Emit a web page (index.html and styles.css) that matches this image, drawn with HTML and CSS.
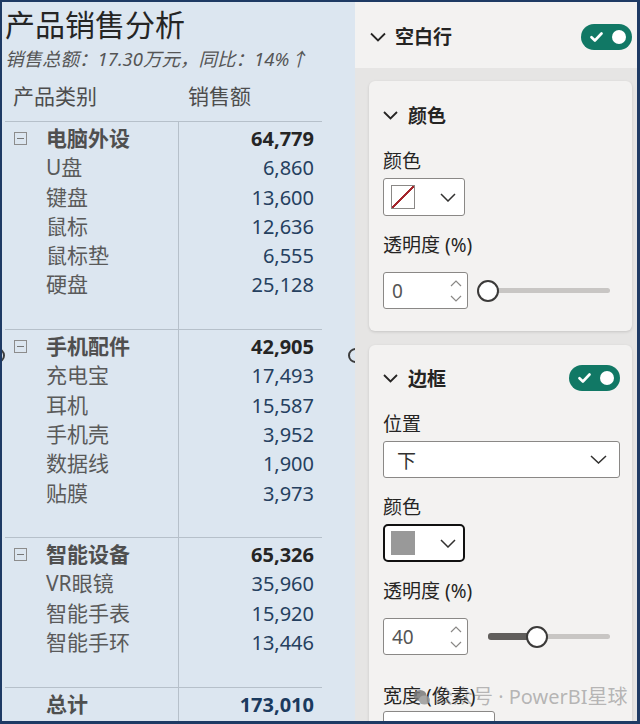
FILE: index.html
```html
<!DOCTYPE html>
<html lang="zh-CN">
<head>
    <meta charset="UTF-8">
    <meta name="viewport" content="width=device-width, initial-scale=1.0">
    <title>产品销售分析 - 格式设置</title>
    <link rel="stylesheet" href="styles.css">
</head>
<body>
    <div class="frame">
        <!-- Matrix visual -->
        <section class="visual">
            <h1 class="title">产品销售分析</h1>
            <p class="subtitle">销售总额：17.30万元，同比：14%↑</p>
            <div class="thead">
                <div class="th">产品类别</div>
                <div class="th th-amt">销售额</div>
            </div>
            <div class="tbody">
                <div class="group">
                    <div class="cell cat"><span class="collapse"></span>电脑外设</div>
                    <div class="cell amt">64,779</div>
                    <div class="cell sub">U盘</div><div class="cell num">6,860</div>
                    <div class="cell sub">键盘</div><div class="cell num">13,600</div>
                    <div class="cell sub">鼠标</div><div class="cell num">12,636</div>
                    <div class="cell sub">鼠标垫</div><div class="cell num">6,555</div>
                    <div class="cell sub">硬盘</div><div class="cell num">25,128</div>
                </div>
                <div class="group">
                    <div class="cell cat"><span class="collapse"></span>手机配件</div>
                    <div class="cell amt">42,905</div>
                    <div class="cell sub">充电宝</div><div class="cell num">17,493</div>
                    <div class="cell sub">耳机</div><div class="cell num">15,587</div>
                    <div class="cell sub">手机壳</div><div class="cell num">3,952</div>
                    <div class="cell sub">数据线</div><div class="cell num">1,900</div>
                    <div class="cell sub">贴膜</div><div class="cell num">3,973</div>
                </div>
                <div class="group">
                    <div class="cell cat"><span class="collapse"></span>智能设备</div>
                    <div class="cell amt">65,326</div>
                    <div class="cell sub">VR眼镜</div><div class="cell num">35,960</div>
                    <div class="cell sub">智能手表</div><div class="cell num">15,920</div>
                    <div class="cell sub">智能手环</div><div class="cell num">13,446</div>
                </div>
                <div class="group total">
                    <div class="cell cat total-label">总计</div>
                    <div class="cell amt total-amt">173,010</div>
                </div>
            </div>
            <span class="handle handle-left"></span>
            <span class="handle handle-right"></span>
        </section>

        <!-- Format pane -->
        <aside class="pane">
            <div class="pane-head">
                <svg class="chev" width="16" height="10" viewBox="0 0 16 10"><path d="M1 1.5l7 7 7-7" fill="none" stroke="#252423" stroke-width="1.8"/></svg>
                <span class="pane-title">空白行</span>
                <span class="toggle">
                    <svg width="13" height="10" viewBox="0 0 13 10"><path d="M1.5 5.2l3.4 3.3 6.6-7" fill="none" stroke="#fff" stroke-width="2.6" stroke-linecap="round" stroke-linejoin="round"/></svg>
                    <span class="toggle-dot"></span>
                </span>
            </div>

            <div class="cards">
                <div class="card">
                    <div class="card-head">
                        <svg width="15" height="9" viewBox="0 0 15 9"><path d="M1 1l6.5 6.5L14 1" fill="none" stroke="#252423" stroke-width="1.8"/></svg>
                        颜色
                    </div>
                    <div class="label">颜色</div>
                    <div class="picker">
                        <span class="swatch swatch-none"></span>
                        <svg width="16" height="9" viewBox="0 0 16 9"><path d="M1 1l7 7 7-7" fill="none" stroke="#323130" stroke-width="1.5"/></svg>
                    </div>
                    <div class="label">透明度 (%)</div>
                    <div class="spin-row">
                        <div class="spin">
                            <span>0</span>
                            <svg width="12" height="22" viewBox="0 0 12 22"><path d="M1 6l5-5 5 5M1 16l5 5 5-5" fill="none" stroke="#8a8886" stroke-width="1.2"/></svg>
                        </div>
                        <div class="slider">
                            <span class="fill" style="width: 0%"></span>
                            <span class="knob" style="left: 0%"></span>
                        </div>
                    </div>
                </div>

                <div class="card card-border">
                    <div class="card-head">
                        <svg width="15" height="9" viewBox="0 0 15 9"><path d="M1 1l6.5 6.5L14 1" fill="none" stroke="#252423" stroke-width="1.8"/></svg>
                        边框
                        <span class="toggle">
                            <svg width="13" height="10" viewBox="0 0 13 10"><path d="M1.5 5.2l3.4 3.3 6.6-7" fill="none" stroke="#fff" stroke-width="2.6" stroke-linecap="round" stroke-linejoin="round"/></svg>
                            <span class="toggle-dot"></span>
                        </span>
                    </div>
                    <div class="label">位置</div>
                    <div class="dropdown">
                        <span>下</span>
                        <svg width="17" height="9" viewBox="0 0 17 9"><path d="M1 1l7.5 7L16 1" fill="none" stroke="#323130" stroke-width="1.5"/></svg>
                    </div>
                    <div class="label">颜色</div>
                    <div class="picker picker-active">
                        <span class="swatch swatch-gray"></span>
                        <svg width="16" height="9" viewBox="0 0 16 9"><path d="M1 1l7 7 7-7" fill="none" stroke="#323130" stroke-width="1.5"/></svg>
                    </div>
                    <div class="label">透明度 (%)</div>
                    <div class="spin-row">
                        <div class="spin">
                            <span>40</span>
                            <svg width="12" height="22" viewBox="0 0 12 22"><path d="M1 6l5-5 5 5M1 16l5 5 5-5" fill="none" stroke="#8a8886" stroke-width="1.2"/></svg>
                        </div>
                        <div class="slider">
                            <span class="fill" style="width: 40%"></span>
                            <span class="knob" style="left: 40%"></span>
                        </div>
                    </div>
                    <div class="label label-gap">宽度 (像素)</div>
                    <div class="spin spin-wide"></div>
                </div>
            </div>
        </aside>

        <!-- Watermark -->
        <div class="watermark">
            <svg width="18" height="18" viewBox="0 0 18 18"><ellipse cx="7" cy="7.5" rx="6.5" ry="5.5" fill="#7a7a7a"/><ellipse cx="11.5" cy="12" rx="5.5" ry="4.5" fill="#9a9a9a"/></svg>
            <span>公众号 · PowerBI星球</span>
        </div>
    </div>
</body>
</html>
```

FILE: styles.css
```css
body {
    margin: 0;
    font-family: "Noto Sans", "Noto Sans CJK SC", sans-serif;
}
.frame {
    position: relative;
    display: flex;
    width: 640px;
    height: 724px;
    box-sizing: border-box;
    border: 2px solid #1e3a64;
    border-right-width: 3px;
    border-bottom-width: 3px;
    overflow: hidden;
}

/* Matrix visual */
.visual {
    position: relative;
    display: flex;
    flex-direction: column;
    flex: none;
    width: 353px;
    box-sizing: border-box;
    padding: 5px 0 0 3px;
    background-color: #dce6f0;
    overflow: hidden;
}
.title {
    margin: 0;
    font-size: 30px;
    line-height: 36px;
    font-weight: 400;
    color: #252525;
}
.subtitle {
    margin: 4px 0 0;
    font-size: 18.5px;
    line-height: 24px;
    font-style: italic;
    color: #555;
}
.thead {
    display: grid;
    grid-template-columns: 173px 144px;
    width: 317px;
    margin-top: 10px;
    padding-bottom: 10px;
    border-bottom: 1px solid #b6c0ca;
    font-size: 21px;
    line-height: 30px;
    color: #4d4d4d;
}
.th {
    padding-left: 8px;
}
.th-amt {
    padding-left: 10px;
}
.tbody {
    flex: 1;
    width: 317px;
    background: linear-gradient(#b6c0ca, #b6c0ca) 173px 0 / 1px 100% no-repeat;
}
.group {
    display: grid;
    grid-template-columns: 173px 144px;
    grid-auto-rows: 29.3px;
    padding: 2px 0 29.3px;
    border-bottom: 1px solid #b6c0ca;
}
.total {
    padding-bottom: 0;
    border-bottom: none;
}
.cell {
    line-height: 29.3px;
    white-space: nowrap;
}
.cat {
    display: flex;
    align-items: center;
    padding-left: 9px;
    font-size: 21px;
    font-weight: 700;
    color: #4f4f4f;
}
.collapse {
    position: relative;
    width: 13px;
    height: 13px;
    box-sizing: border-box;
    margin-right: 19px;
    border: 1px solid #8c8c8c;
}
.collapse::after {
    content: "";
    position: absolute;
    left: 2px;
    right: 2px;
    top: 5px;
    height: 1px;
    background-color: #777;
}
.sub {
    padding-left: 41px;
    font-size: 21px;
    color: #5a5a5a;
}
.amt, .num {
    padding-right: 8px;
    text-align: right;
    font-size: 20px;
}
.amt {
    font-weight: 700;
    color: #252525;
}
.num {
    color: #25405f;
}
.total-label {
    padding-left: 41px;
}
.total-amt {
    color: #1b3a5e;
}
.handle {
    position: absolute;
    top: 346px;
    width: 15px;
    height: 15px;
    box-sizing: border-box;
    border: 2px solid #3d3d3d;
    border-radius: 50%;
}
.handle-left {
    left: -12px;
}
.handle-right {
    left: 346px;
}

/* Format pane */
.pane {
    display: flex;
    flex-direction: column;
    flex: 1;
    background-color: #e6e5e4;
    overflow: hidden;
    font-size: 19px;
    color: #252423;
}
.pane-head {
    display: flex;
    align-items: center;
    gap: 9px;
    flex: none;
    height: 66px;
    box-sizing: border-box;
    padding: 4px 5px 0 15px;
    background-color: #f3f2f1;
}
.pane-title {
    font-weight: 700;
    line-height: 28px;
}
.toggle {
    display: flex;
    align-items: center;
    justify-content: space-between;
    width: 51px;
    height: 26px;
    box-sizing: border-box;
    margin-left: auto;
    padding: 0 6px 0 9px;
    border-radius: 13px;
    background-color: #117865;
}
.toggle-dot {
    width: 14px;
    height: 14px;
    border-radius: 50%;
    background-color: #fff;
}
.cards {
    display: flex;
    flex-direction: column;
    gap: 14px;
    padding: 13px 5px 0 14px;
}
.card {
    flex: none;
    padding: 20px 12px 22px 14px;
    border-radius: 6px;
    background-color: #f3f2f1;
    box-shadow: 0 1px 3px rgba(0, 0, 0, 0.14);
}
.card-border {
    padding-top: 19px;
}
.card-head {
    display: flex;
    align-items: center;
    gap: 10px;
    height: 28px;
    font-weight: 700;
}
.label {
    margin-top: 17px;
    line-height: 24px;
}
.card-head + .label {
    margin-top: 20px;
}
.label-gap {
    margin-top: 29px;
}
.picker {
    display: flex;
    align-items: center;
    justify-content: space-between;
    width: 82px;
    height: 38px;
    box-sizing: border-box;
    margin-top: 5px;
    padding: 0 8px 0 7px;
    border: 1px solid #8a8886;
    border-radius: 3px;
    background-color: #fff;
}
.picker-active {
    padding: 0 7px 0 6px;
    border: 2px solid #111;
    border-radius: 5px;
}
.swatch {
    width: 24px;
    height: 24px;
    box-sizing: border-box;
}
.swatch-none {
    border: 1px solid #8a8886;
    background: linear-gradient(to bottom right, transparent calc(50% - 1px), #a4262c calc(50% - 1px), #a4262c calc(50% + 1px), transparent calc(50% + 1px));
}
.swatch-gray {
    background-color: #999;
}
.dropdown {
    display: flex;
    align-items: center;
    justify-content: space-between;
    height: 37px;
    box-sizing: border-box;
    margin-top: 5px;
    padding: 0 12px 0 13px;
    border: 1px solid #8a8886;
    border-radius: 3px;
    background-color: #fff;
    color: #323130;
}
.spin-row {
    display: flex;
    align-items: center;
    margin-top: 15px;
}
.spin {
    display: flex;
    align-items: center;
    justify-content: space-between;
    width: 85px;
    height: 37px;
    box-sizing: border-box;
    padding: 0 5px 0 8px;
    border: 1px solid #8a8886;
    border-radius: 3px;
    background-color: #fff;
    color: #555;
}
.spin-wide {
    width: 112px;
    margin-top: 3px;
}
.slider {
    position: relative;
    width: 122px;
    height: 5px;
    margin-left: 20px;
    border-radius: 3px;
    background-color: #c8c6c4;
}
.fill {
    position: absolute;
    left: 0;
    top: -1px;
    height: 7px;
    border-radius: 3px;
    background-color: #605e5c;
}
.knob {
    position: absolute;
    top: 50%;
    width: 22px;
    height: 22px;
    box-sizing: border-box;
    margin: -11px 0 0 -11px;
    border: 2px solid #3b3a39;
    border-radius: 50%;
    background-color: #fff;
}

/* Watermark */
.watermark {
    position: absolute;
    left: 411px;
    top: 682px;
    display: flex;
    align-items: center;
    gap: 2px;
    font-size: 20px;
    line-height: 26px;
    color: rgba(110, 110, 110, 0.55);
    opacity: 0.85;
}
```
